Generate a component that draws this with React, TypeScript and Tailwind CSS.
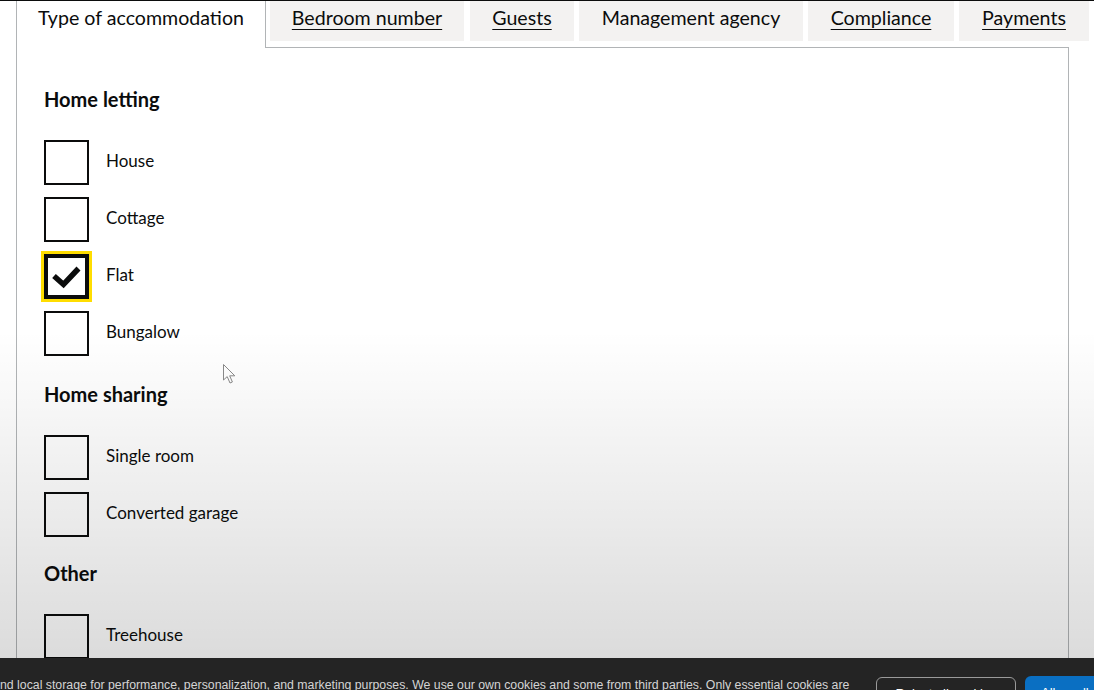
import React from "react";

const GRAY_TABS = [
  { label: "Bedroom number", w: "w-[194px]", ml: "ml-[4px]" },
  { label: "Guests", w: "w-[104px]", ml: "ml-[6px]" },
  { label: "Management agency", w: "w-[224px]", ml: "ml-[5px]", plain: true },
  { label: "Compliance", w: "w-[146px]", ml: "ml-[5px]" },
  { label: "Payments", w: "w-[130px]", ml: "ml-[5px]" },
];

type Item = { label: string; checked?: boolean };

const SECTIONS: { title: string; mt: string; items: Item[] }[] = [
  {
    title: "Home letting",
    mt: "mt-0",
    items: [{ label: "House" }, { label: "Cottage" }, { label: "Flat", checked: true }, { label: "Bungalow" }],
  },
  {
    title: "Home sharing",
    mt: "mt-[26px]",
    items: [{ label: "Single room" }, { label: "Converted garage" }],
  },
  {
    title: "Other",
    mt: "mt-[24px]",
    items: [{ label: "Treehouse" }],
  },
];

function Checkbox({ item }: { item: Item }) {
  return (
    <div className="flex items-center">
      {item.checked ? (
        <div className="relative h-[45px] w-[45px] shrink-0 border-[4px] border-[#0b0c0c] bg-white shadow-[0_0_0_3px_#ffdd00]">
          <svg className="absolute left-[-4px] top-[-4px] h-[45px] w-[45px]" viewBox="0 0 45 45">
            <polyline points="10,22 19.5,30.5 34.5,14.5" fill="none" stroke="#0b0c0c" strokeWidth="5.5" strokeLinecap="butt" strokeLinejoin="miter" />
          </svg>
        </div>
      ) : (
        <div className="h-[45px] w-[45px] shrink-0 border-2 border-[#0b0c0c] bg-white" />
      )}
      <span className="mb-[4px] ml-[17px] text-[17px] leading-[25px] text-[#0b0c0c]">{item.label}</span>
    </div>
  );
}

export default function App() {
  return (
    <div className="relative h-[690px] w-full overflow-hidden bg-white font-['Lato','Noto_Sans',sans-serif] text-[#0b0c0c]">
      <div className="h-px bg-[#0b0c0c]" />
      <div className="ml-4">
        {/* Tabs */}
        <div className="flex items-start">
          <div className="relative z-10 -mb-px h-[47px] w-[250px] shrink-0 border-x border-[#b1b4b6] bg-white pl-[21px] pt-[4px] text-[19.6px] leading-[25px]">
            Type of accommodation
          </div>
          {GRAY_TABS.map((t) => (
            <div
              key={t.label}
              className={`${t.w} ${t.ml} flex h-[40px] shrink-0 justify-center bg-[#f3f2f1] pt-[4px] text-[19.6px] leading-[25px]`}
            >
              <span className={t.plain ? "" : "underline decoration-1 underline-offset-[4px]"}>{t.label}</span>
            </div>
          ))}
        </div>
        {/* Panel */}
        <div className="h-[700px] w-[1053px] border-x border-t border-[#b1b4b6] bg-white pl-[27px] pt-[39px]">
          {SECTIONS.map((s) => (
            <div key={s.title} className={s.mt}>
              <h2 className="mb-[28px] text-[20px] font-bold leading-[25px]">{s.title}</h2>
              <div className="flex flex-col gap-[12px]">
                {s.items.map((it) => (
                  <Checkbox key={it.label} item={it} />
                ))}
              </div>
            </div>
          ))}
        </div>
      </div>

      {/* mouse cursor */}
      <svg className="pointer-events-none absolute left-[222px] top-[363px] h-[22px] w-[16px]" viewBox="0 0 16 22">
        <path d="M1.5 1.5 L1.5 17 L5.2 13.6 L8 20 L10.4 19 L7.7 12.8 L12.8 12.8 Z" fill="#ffffff" stroke="#8a8a8a" strokeWidth="1" strokeLinejoin="round" />
      </svg>

      {/* fading overlay */}
      <div className="pointer-events-none absolute left-0 right-0 top-[330px] h-[328px] bg-linear-to-b from-transparent to-black/[0.14]" />

      {/* cookie banner */}
      <div className="absolute left-0 right-0 top-[658px] flex h-[60px] items-start bg-[#242424] pt-[18px] font-['Liberation_Sans',sans-serif]">
        <p className="w-[876px] shrink-0 overflow-hidden whitespace-nowrap text-[12.3px] leading-[18px] text-[#d4d4d4]">
          nd local storage for performance, personalization, and marketing purposes. We use our own cookies and some from third parties. Only essential cookies are
        </p>
        <button className="mt-px h-[34px] w-[140px] shrink-0 rounded-[6px] border border-[#9a9a9a] text-[13px] text-white">
          Reject all cookies
        </button>
        <button className="ml-[9px] h-[34px] w-[110px] shrink-0 rounded-[6px] bg-[#0a6fc2] px-4 text-left text-[13px] text-white">
          Allow all
        </button>
      </div>
    </div>
  );
}
